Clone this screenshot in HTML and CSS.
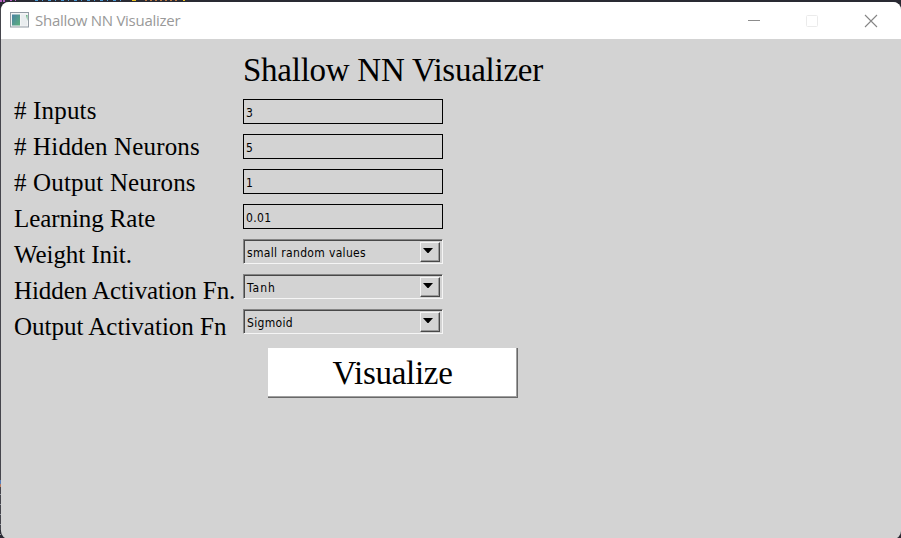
FILE: index.html
```
<!DOCTYPE html>
<html lang="en">
<head>
<meta charset="utf-8">
<title>Shallow NN Visualizer</title>
<link rel="stylesheet" href="styles.css">
</head>
<body>
<svg class="backdrop" width="901" height="538" aria-hidden="true">
  <path d="M.5 8V530" stroke="#45454c"/>
  <path d="M0 1H6" stroke="#b45fc0" stroke-width="2" stroke-dasharray="2 1"/>
  <path d="M10 .5H16" stroke="#b45fc0" stroke-dasharray="2 3"/>
  <path d="M35 .5H124" stroke="#4c9bd6" stroke-dasharray="3 4 1 5"/>
  <path d="M132 .5H136M183 .5H185" stroke="#e8c020"/>
  <path d="M145 .5H178" stroke="#b8763f" stroke-dasharray="2 3"/>
  <path d="M.5 480V484" stroke="#547bb8"/>
  <path d="M.5 484V487" stroke="#b87b62"/>
  <path d="M.5 494V535" stroke="#93969c" stroke-dasharray="1 9"/>
</svg>
<div class="window">
  <header class="titlebar">
    <svg class="app-icon" width="19" height="16" viewBox="0 0 19 16">
      <defs><linearGradient id="pane" x2="1" y2="1"><stop stop-color="#4a82a4"/><stop offset="1" stop-color="#5cb07c"/></linearGradient></defs>
      <rect x=".5" y=".5" width="18" height="14.5" fill="#f4f5f6" stroke="#929ba4"/>
      <rect x="2" y="2.5" width="8" height="11" fill="url(#pane)"/>
      <rect x="11" y="2.5" width="6" height="11" fill="#e9edef"/>
      <path d="M16 3h1.500v6z" fill="#5cb07c"/>
    </svg>
    <span class="caption">Shallow NN Visualizer</span>
    <svg class="controls" width="130" height="14" viewBox="0 0 130 14">
      <path d="M0 6.500H12" stroke="#8c8c8c"/>
      <rect x="58.500" y="1.500" width="11" height="11" rx="1" fill="none" stroke="#ebebeb"/>
      <path d="M117 1L129 13M129 1L117 13" stroke="#858585" stroke-width="1.100"/>
    </svg>
  </header>
  <main class="form">
    <h1 class="heading">Shallow NN Visualizer</h1>
    <div class="columns">
      <div class="labels">
        <span class="label count">#&nbsp;Inputs</span>
        <span class="label count">#&nbsp;Hidden Neurons</span>
        <span class="label count">#&nbsp;Output Neurons</span>
        <span class="label tight">Learning Rate</span>
        <span class="label tight">Weight Init.</span>
        <span class="label tight">Hidden Activation Fn.</span>
        <span class="label">Output Activation Fn</span>
      </div>
      <div class="fields">
        <div class="entry">3</div>
        <div class="entry">5</div>
        <div class="entry">1</div>
        <div class="entry">0.01</div>
        <div class="combo"><span>small random values</span><i class="drop"><svg width="10" height="5"><path d="M0 0H10L5.500 5H4.500Z"/></svg></i></div>
        <div class="combo"><span class="wide">Tanh</span><i class="drop"><svg width="10" height="5"><path d="M0 0H10L5.500 5H4.500Z"/></svg></i></div>
        <div class="combo"><span>Sigmoid</span><i class="drop"><svg width="10" height="5"><path d="M0 0H10L5.500 5H4.500Z"/></svg></i></div>
      </div>
    </div>
    <button class="visualize">Visualize</button>
  </main>
</div>
</body>
</html>
```
FILE: styles.css
```
* { box-sizing: border-box; }
body {
  margin: 0;
  height: 538px;
  overflow: hidden;
  padding: 2px 0 0 1px;
  background: #292a33;
  color: #000;
}
.backdrop { position: absolute; left: 0; top: 0; }
.window {
  position: relative;
  width: 900px;
  height: 537px;
  border-radius: 8px;
  overflow: hidden;
  background: #d3d3d3;
}
.titlebar {
  display: flex;
  align-items: center;
  height: 37px;
  padding: 0 23px 0 9px;
  background: #fff;
}
.app-icon { margin: 0 6px 1px 0; }
.caption {
  flex: 1;
  padding-bottom: 2px;
  font: 15px/20px "Open Sans", sans-serif;
  letter-spacing: -0.27px;
  color: #999;
  white-space: nowrap;
}
.form { font-family: "Liberation Serif", serif; }
.heading {
  margin: 0;
  padding-left: 242px;
  height: 60px;
  font-size: 33px;
  font-weight: 400;
  letter-spacing: -0.26px;
  line-height: 62px;
}
.columns { display: flex; height: 249px; padding-left: 13px; }
.labels { width: 229px; }
.label {
  display: block;
  height: 36px;
  font-size: 25px;
  line-height: 24px;
  white-space: nowrap;
}
.count { letter-spacing: 0.16px; }
.tight { letter-spacing: -0.08px; }
.fields {
  display: flex;
  flex-direction: column;
  gap: 10px;
  width: 200px;
  font: 12px/25px "DejaVu Sans Condensed", "DejaVu Sans", sans-serif;
  letter-spacing: 0.34px;
}
.entry { height: 25px; padding-left: 2px; border: 1px solid #000; }
.combo {
  display: flex;
  justify-content: space-between;
  height: 25px;
  padding: 2px 2px 0 3px;
  border: 1px solid;
  border-color: #858585 #f5f5f5 #f5f5f5 #858585;
  box-shadow: inset 1px 1px #484848;
}
.combo span { line-height: 23px; }
.combo .wide { letter-spacing: 1px; }
.entry { padding-top: 1px; }
.drop {
  display: flex;
  width: 20px;
  height: 20px;
  padding: 5px 0 0 2px;
  border: 1px solid;
  border-color: #f5f5f5 #484848 #484848 #f5f5f5;
  box-shadow: inset -1px -1px #999;
}
.visualize {
  display: block;
  width: 250px;
  height: 50px;
  margin: 0 0 0 267px;
  padding: 0;
  border: solid #696969;
  border-width: 0 1px 1px 0;
  box-shadow: inset -1px -1px #a0a0a0;
  background: #fff;
  color: #000;
  font: 33px/50px "Liberation Serif", serif;
  letter-spacing: -0.28px;
}
```
